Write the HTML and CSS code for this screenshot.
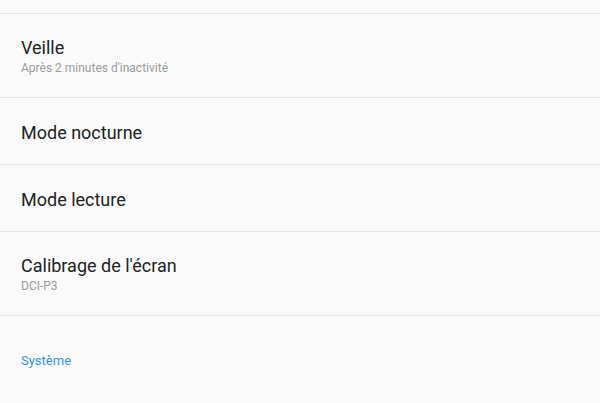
FILE: index.html
```html
<!DOCTYPE html>
<html lang="fr">
<head>
<meta charset="utf-8">
<link rel="stylesheet" href="styles.css">
</head>
<body>
<div class="screen">
  <div class="top"></div>
  <div class="item tall">
    <div class="title">Veille</div>
    <div class="sub">Après 2 minutes d'inactivité</div>
  </div>
  <div class="item">
    <div class="title">Mode nocturne</div>
  </div>
  <div class="item">
    <div class="title">Mode lecture</div>
  </div>
  <div class="item tall">
    <div class="title">Calibrage de l'écran</div>
    <div class="sub">DCI-P3</div>
  </div>
  <div class="section">Système</div>
</div>
</body>
</html>
```

FILE: styles.css
```css
html, body {
  margin: 0;
  padding: 0;
  background: #fafafa;
}
.screen {
  width: 600px;
  height: 403px;
  overflow: hidden;
  font-family: Roboto, "Noto Sans", sans-serif;
  display: flex;
  flex-direction: column;
}
.top {
  height: 13px;
  border-bottom: 1px solid #e3e3e3;
  flex: none;
}
.item {
  flex: none;
  box-sizing: border-box;
  height: 67px;
  border-bottom: 1px solid #e3e3e3;
  padding: 3px 21px 0;
  display: flex;
  flex-direction: column;
  justify-content: center;
}
.item.tall {
  height: 84px;
}
.title {
  font-size: 18px;
  line-height: 22px;
  color: #222222;
}
.sub {
  margin-top: 1px;
  font-size: 12px;
  line-height: 17px;
  color: #9a9a9a;
}
.section {
  padding: 36px 21px 0;
  font-size: 13px;
  line-height: 18px;
  color: #2f95e3;
}
```
